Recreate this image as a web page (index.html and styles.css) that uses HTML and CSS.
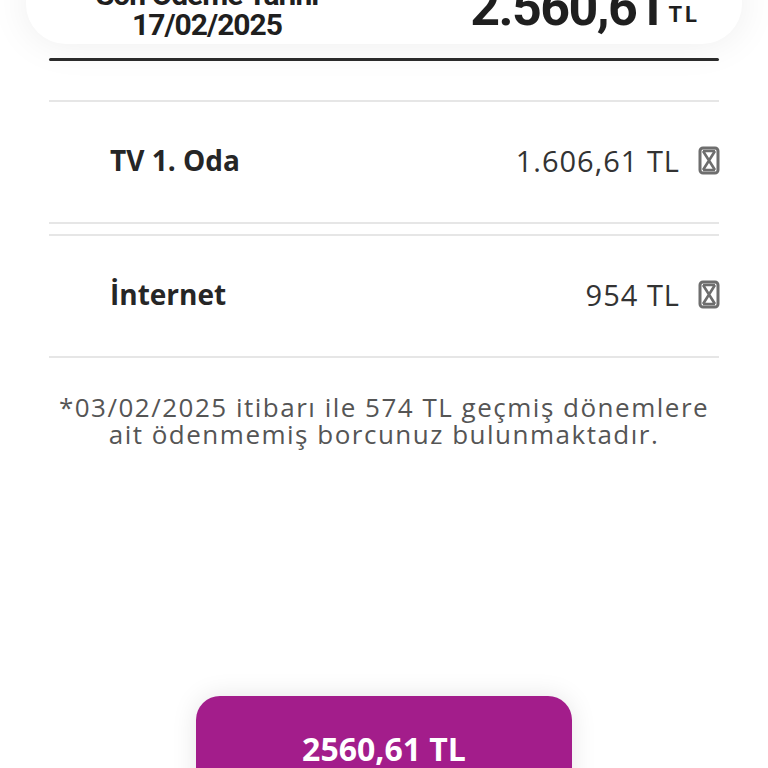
FILE: index.html
```html
<!DOCTYPE html>
<html lang="tr">
<head>
<meta charset="utf-8">
<link rel="stylesheet" href="styles.css">
</head>
<body>
<div class="page">
  <div class="summary-card">
    <div class="due">
      <div class="due-label">Son Ödeme Tarihi</div>
      <div class="due-date">17/02/2025</div>
    </div>
    <div class="total">
      <span class="total-amount">2.560,61</span><span class="total-cur">TL</span>
    </div>
  </div>
  <div class="divider"></div>
  <div class="items">
    <div class="item">
      <div class="item-name">TV 1. Oda</div>
      <div class="item-right">
        <span class="item-price">1.606,61 TL</span>
        <svg class="tofu" width="22" height="29" viewBox="0 0 22 29"><rect x="2" y="2" width="18" height="25" rx="3" fill="none" stroke="#6e6e6e" stroke-width="3"/><path d="M5 5 L17 24 M17 5 L5 24 M5 5 H17 M5 24 H17" fill="none" stroke="#6e6e6e" stroke-width="2.6"/></svg>
      </div>
    </div>
    <div class="item">
      <div class="item-name">İnternet</div>
      <div class="item-right">
        <span class="item-price">954 TL</span>
        <svg class="tofu" width="22" height="29" viewBox="0 0 22 29"><rect x="2" y="2" width="18" height="25" rx="3" fill="none" stroke="#6e6e6e" stroke-width="3"/><path d="M5 5 L17 24 M17 5 L5 24 M5 5 H17 M5 24 H17" fill="none" stroke="#6e6e6e" stroke-width="2.6"/></svg>
      </div>
    </div>
  </div>
  <p class="note">*03/02/2025 itibarı ile 574 TL geçmiş dönemlere ait ödenmemiş borcunuz bulunmaktadır.</p>
  <div class="pay-wrap">
    <button class="pay-btn">2560,61 TL</button>
  </div>
</div>
</body>
</html>
```

FILE: styles.css
```css
* { box-sizing: border-box; }
html, body { margin: 0; padding: 0; background: #ffffff; }
body {
  font-family: "Open Sans", "Liberation Sans", sans-serif;
  color: #2a2a2a;
  width: 768px;
  height: 768px;
  overflow: hidden;
}
.page { display: flex; flex-direction: column; }

.summary-card {
  margin: -20px 26px 0;
  padding: 0 42px 4px 62px;
  display: flex;
  justify-content: space-between;
  align-items: flex-end;
  background: #fff;
  border-radius: 0 0 40px 40px;
  box-shadow: 0 0 40px rgba(0, 0, 0, 0.075);
  font-family: Roboto, "Liberation Sans", sans-serif;
  font-weight: 700;
  color: #1f1f1f;
}
.due { text-align: center; width: 238px; }
.due-label, .due-date {
  font-size: 30px;
  line-height: 30px;
  letter-spacing: -1px;
}
.total { display: flex; align-items: flex-start; padding-bottom: 6px; }
.total-amount {
  font-size: 52px;
  line-height: 52px;
  letter-spacing: -1.6px;
}
.total-cur {
  font-size: 22px;
  line-height: 22px;
  letter-spacing: 3px;
  margin: 22px 0 0 4px;
}

.divider {
  margin: 14px 49px 0;
  height: 3px;
  background: #2b2b2b;
  border-radius: 2px;
}

.items {
  margin: 39px 49px 0;
  display: flex;
  flex-direction: column;
  gap: 10px;
}
.item {
  height: 124px;
  border-top: 2px solid #e6e6e6;
  border-bottom: 2px solid #e6e6e6;
  display: flex;
  align-items: center;
  justify-content: space-between;
  padding: 0 0 4px 61px;
}
.item-name {
  font-size: 28px;
  font-weight: 700;
  color: #262626;
}
.item-right { display: flex; align-items: center; gap: 18px; }
.item-price {
  font-size: 29px;
  font-weight: 400;
  letter-spacing: 1px;
  color: #333;
}
.tofu { display: block; margin-right: -1px; }

.note {
  margin: 36px 40px 0;
  text-align: center;
  font-size: 26px;
  line-height: 27px;
  letter-spacing: 1.5px;
  color: #555;
}

.pay-wrap { display: flex; justify-content: center; margin-top: 248px; }
.pay-btn {
  width: 376px;
  height: 104px;
  border: none;
  border-radius: 24px;
  background: #a31d8b;
  color: #fff;
  font-family: "Open Sans", "Liberation Sans", sans-serif;
  font-size: 32px;
  font-weight: 700;
  padding: 0;
  box-shadow: 0 0 26px rgba(0, 0, 0, 0.1);
}
```
